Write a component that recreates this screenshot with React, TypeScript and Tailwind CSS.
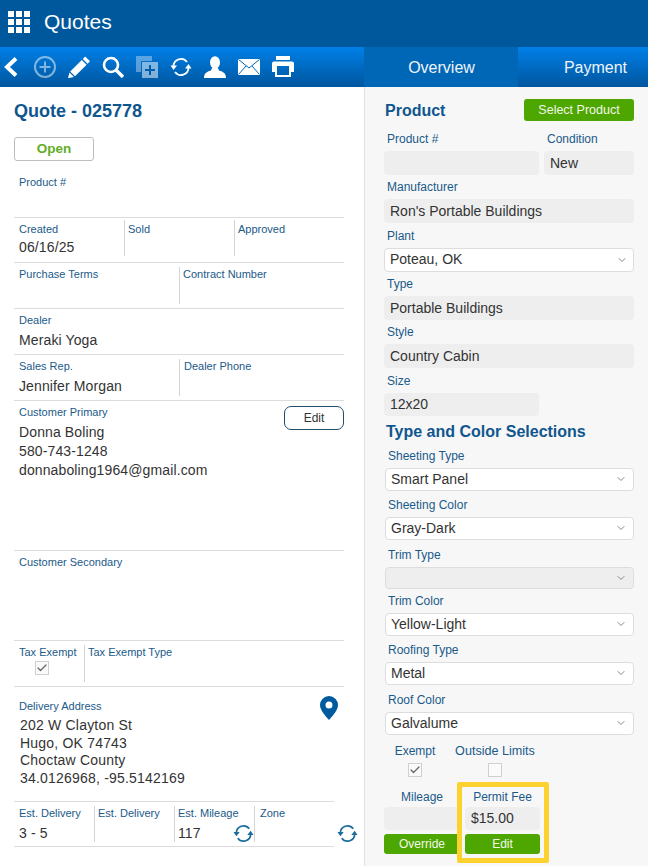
import { ChevronDown, Check } from 'lucide-react';

function SyncIcon({ className }: { className?: string }) {
  return (
    <svg viewBox="0 0 22 22" className={className} fill="none" stroke="currentColor" strokeWidth="1.8">
      <path d="M3.500 10.500A7.500 7.500 0 0 1 17 6" />
      <path d="M0.500 9.500h6.500l-3.500 4.500z" fill="currentColor" stroke="none" />
      <path d="M18.500 11.500A7.500 7.500 0 0 1 5 16" />
      <path d="M21.500 12.500h-6.500l3.500-4.500z" fill="currentColor" stroke="none" />
    </svg>
  );
}

function Toolbar() {
  return (
    <div className="flex h-[40px] w-[364px] items-center gap-[12px] text-white">
      <svg viewBox="0 0 22 22" className="h-[22px] w-[22px]" fill="none" stroke="white" strokeWidth="4" strokeLinejoin="miter">
        <path d="M16 2.500 7 11l9 8.500" />
      </svg>
      <svg viewBox="0 0 22 22" className="h-[22px] w-[22px] opacity-50" fill="none" stroke="white" strokeWidth="2">
        <circle cx="11" cy="11" r="10" />
        <path d="M11 5.500v11M5.500 11h11" />
      </svg>
      <svg viewBox="0 0 22 22" className="h-[22px] w-[22px]" fill="white">
        <path d="M17.200 0.500 22 5.300l-2.400 2.400-4.800-4.800z" />
        <path d="M13.800 4 18.600 8.800 7 20.200 2.200 15.400z" />
        <path d="M1.500 16.600 5.900 21 0 22.200z" />
      </svg>
      <svg viewBox="0 0 22 22" className="h-[22px] w-[22px]" fill="none" stroke="white">
        <circle cx="9" cy="9" r="7" strokeWidth="2.600" />
        <path d="m14 14 7 7" strokeWidth="3.400" />
      </svg>
      <svg viewBox="0 0 22 22" className="h-[22px] w-[22px] opacity-50">
        <path d="M0 0h16v5H5v11H0z" fill="white" fillOpacity="0.7" />
        <path d="M6 6h16v16H6z" fill="white" />
        <path d="M14 9v10M9 14h10" stroke="#00569e" strokeWidth="2" />
      </svg>
      <SyncIcon className="h-[22px] w-[22px]" />
      <svg viewBox="0 0 22 22" className="h-[22px] w-[22px]" fill="white">
        <ellipse cx="11" cy="6.500" rx="5" ry="6.200" />
        <path d="M8 12h6l1 2.500c3.500 1 7 2.200 7 7.500H0c0-5.300 3.500-6.500 7-7.500z" />
      </svg>
      <svg viewBox="0 0 22 22" className="h-[22px] w-[22px]">
        <rect x="0" y="3" width="22" height="16" fill="white" />
        <path d="M0.500 3.500 11 12l10.500-8.500M0.500 18.500l7.500-8.500M21.500 18.500 14 10" fill="none" stroke="#0068b8" strokeWidth="1" />
      </svg>
      <svg viewBox="0 0 22 22" className="h-[22px] w-[22px]" fill="white">
        <path d="M4 0h14v4H4z" />
        <path fillRule="evenodd" d="M2 5.500h18q2 0 2 2V16h-3v5H3v-5H0V7.500q0-2 2-2zM5 10v9h12v-9z" />
      </svg>
    </div>
  );
}

function Cell({ label, value, tight, className }: { label: string; value?: string; tight?: boolean; className?: string }) {
  return (
    <div className={`h-full ${className ?? 'pl-[5px]'}`}>
      <div className="pt-[5px] text-[11px] leading-[13px] text-[#1a5a8a]">{label}</div>
      {value && (
        <div className={`text-[14px] leading-[16px] tracking-[0.12px] text-[#333] ${tight ? 'mt-[3px]' : 'mt-[5px]'}`}>{value}</div>
      )}
    </div>
  );
}

function Divider({ className }: { className?: string }) {
  return <div className={`w-px self-stretch bg-[#d4d4d4] ${className ?? ''}`} />;
}

function Tick({ checked }: { checked?: boolean }) {
  return (
    <div className="flex h-[14px] w-[14px] items-center justify-center border border-[#d0d0d0] bg-[#fafafa]">
      {checked && <Check size={12} strokeWidth={2.5} className="text-[#666]" />}
    </div>
  );
}

function LeftPanel() {
  return (
    <div className="w-[364px] shrink-0 bg-white pl-[14px] pr-[20px]">
      <h1 className="pt-[14px] text-[18px] font-bold leading-[20px] text-[#0f568f]">Quote - 025778</h1>
      <div className="mt-[16px] flex h-[24px] w-[80px] items-center justify-center rounded-[3px] border border-[#bdbdbd] text-[13.5px] font-bold text-[#62ad28]">
        Open
      </div>
      <div className="h-[56px]">
        <Cell label="Product #" className="pl-[5px] pt-[10px]" />
      </div>
      <div className="flex h-[45px] border-t border-[#dcdcdc]">
        <Cell label="Created" value="06/16/25" tight className="w-[110px] pl-[5px]" />
        <Divider className="mt-[2px] mb-[6px]" />
        <Cell label="Sold" className="w-[109px] pl-[3px]" />
        <Divider className="mt-[2px] mb-[6px]" />
        <Cell label="Approved" className="flex-1 pl-[3px]" />
      </div>
      <div className="flex h-[46px] border-t border-[#dcdcdc]">
        <Cell label="Purchase Terms" className="w-[165px] pl-[5px]" />
        <Divider className="mt-[4px] mb-[4px]" />
        <Cell label="Contract Number" className="flex-1 pl-[3px]" />
      </div>
      <div className="h-[46px] border-t border-[#dcdcdc]">
        <Cell label="Dealer" value="Meraki Yoga" />
      </div>
      <div className="flex h-[46px] border-t border-[#dcdcdc]">
        <Cell label="Sales Rep." value="Jennifer Morgan" className="w-[165px] pl-[5px]" />
        <Divider className="mt-[4px] mb-[4px]" />
        <Cell label="Dealer Phone" className="flex-1 pl-[4px]" />
      </div>
      <div className="flex h-[150px] justify-between border-t border-[#dcdcdc]">
        <div className="pl-[5px]">
          <div className="pt-[5px] text-[11px] leading-[13px] text-[#1a5a8a]">Customer Primary</div>
          <div className="mt-[4px] text-[14px] leading-[19px] tracking-[0.12px] text-[#333]">
            <div>Donna Boling</div>
            <div>580-743-1248</div>
            <div>donnaboling1964@gmail.com</div>
          </div>
        </div>
        <div className="mt-[5px] flex h-[24px] w-[60px] items-center justify-center rounded-[7px] border border-[#1f4e6e] text-[12px] text-[#333]">
          Edit
        </div>
      </div>
      <div className="h-[90px] border-t border-[#dcdcdc]">
        <Cell label="Customer Secondary" />
      </div>
      <div className="flex h-[46px] border-t border-[#dcdcdc]">
        <div className="w-[70px] pl-[5px]">
          <div className="pt-[5px] text-[11px] leading-[13px] text-[#1a5a8a]">Tax Exempt</div>
          <div className="mt-[2px] pl-[16px]">
            <Tick checked />
          </div>
        </div>
        <Divider className="mt-[4px] mb-[4px]" />
        <Cell label="Tax Exempt Type" className="flex-1 pl-[3px]" />
      </div>
      <div className="flex h-[115px] justify-between border-t border-[#dcdcdc]">
        <div className="pl-[5px]">
          <div className="pt-[13px] text-[11px] leading-[13px] text-[#1a5a8a]">Delivery Address</div>
          <div className="mt-[4px] pl-[1px] text-[14px] leading-[17.700px] tracking-[0.2px] text-[#333]">
            <div>202 W Clayton St</div>
            <div>Hugo, OK 74743</div>
            <div>Choctaw County</div>
            <div>34.0126968, -95.5142169</div>
          </div>
        </div>
        <svg viewBox="0 0 18 24" className="mt-[9px] mr-[6px] h-[24px] w-[18px] text-[#005a9e]" fill="currentColor">
          <path fillRule="evenodd" d="M9 0a9 9 0 0 1 9 9c0 5-5 10.500-9 15-4-4.500-9-10-9-15a9 9 0 0 1 9-9zm0 5.500a3.500 3.500 0 1 0 0 7 3.500 3.500 0 0 0 0-7z" />
        </svg>
      </div>
      <div className="relative flex h-[46px] w-[320px] border-y border-[#dcdcdc]">
        <Cell label="Est. Delivery" value="3 - 5" className="w-[80px] pl-[5px]" />
        <Divider className="mt-[4px] mb-[4px]" />
        <Cell label="Est. Delivery" className="w-[79px] pl-[3px]" />
        <Divider className="mt-[4px] mb-[4px]" />
        <Cell label="Est. Mileage" value="117" className="w-[79px] pl-[3px]" />
        <Divider className="mt-[4px] mb-[4px]" />
        <Cell label="Zone" className="flex-1 pl-[5px]" />
        <SyncIcon className="absolute left-[219px] top-[21px] h-[21px] w-[21px] text-[#1b6d9c]" />
        <SyncIcon className="absolute left-[323px] top-[21px] h-[21px] w-[21px] text-[#1b6d9c]" />
      </div>
    </div>
  );
}

function Label({ children, className }: { children: string; className?: string }) {
  return <div className={`flex items-end pb-[5px] text-[12px] leading-[14px] text-[#1a5a8a] ${className ?? 'h-[24px] pl-[3px]'}`}>{children}</div>;
}

function ReadOnly({ value, className }: { value?: string; className?: string }) {
  return (
    <div className={`flex items-center rounded-[4px] bg-[#eeeeee] pl-[6px] text-[14px] text-[#333] ${className ?? 'h-[24px]'}`}>
      {value}
    </div>
  );
}

function SelectField({
  label,
  value,
  disabled,
  zone,
  box,
}: {
  label: string;
  value?: string;
  disabled?: boolean;
  zone: string;
  box?: string;
}) {
  return (
    <div className="ml-px">
      <Label className={`${zone} pl-[3px]`}>{label}</Label>
      <div
        className={`flex items-center justify-between rounded-[4px] border border-[#dddddd] pb-px pl-[5px] pr-[6px] text-[14px] text-[#333] ${
          box ?? 'h-[23px]'
        } ${disabled ? 'bg-[#eeeeee]' : 'bg-white'}`}
      >
        <span>{value}</span>
        <ChevronDown size={12} className="text-[#888]" />
      </div>
    </div>
  );
}

function RightPanel() {
  return (
    <div className="flex-1 border-l border-[#e2e2e2] bg-[#f7f7f7] pl-[19px] pr-[14px] pt-[12px]">
      <div className="flex h-[22px] items-center justify-between">
        <h2 className="pl-px pt-[2px] text-[16px] font-bold text-[#0f568f]">Product</h2>
        <div className="flex h-[22px] w-[110px] items-center justify-center rounded-[3px] bg-[#4ea600] text-[12.5px] text-[#f2f8ea]">
          Select Product
        </div>
      </div>
      <div className="mt-[6px] flex gap-[5px]">
        <div className="w-[155px]">
          <Label>Product #</Label>
          <ReadOnly />
        </div>
        <div className="flex-1">
          <Label>Condition</Label>
          <ReadOnly value="New" />
        </div>
      </div>
      <Label>Manufacturer</Label>
      <ReadOnly value="Ron's Portable Buildings" />
      <Label className="h-[25px] pl-[3px]">Plant</Label>
      <div className="flex h-[24px] items-center justify-between rounded-[4px] border border-[#dddddd] bg-white pb-px pl-[5px] pr-[5px] text-[14px] text-[#333]">
        <span>Poteau, OK</span>
        <ChevronDown size={12} className="text-[#888]" />
      </div>
      <Label>Type</Label>
      <ReadOnly value="Portable Buildings" />
      <Label>Style</Label>
      <ReadOnly value="Country Cabin" />
      <Label className="h-[25px] pl-[3px]">Size</Label>
      <ReadOnly value="12x20" className="h-[23px] w-[155px]" />
      <h2 className="flex h-[28px] items-center pl-[2px] pt-[4px] text-[16px] font-bold text-[#0f568f]">Type and Color Selections</h2>
      <SelectField label="Sheeting Type" value="Smart Panel" zone="h-[24px]" />
      <SelectField label="Sheeting Color" value="Gray-Dark" zone="h-[26px]" />
      <SelectField label="Trim Type" disabled zone="h-[27px]" box="h-[22px]" />
      <SelectField label="Trim Color" value="Yellow-Light" zone="h-[24px]" />
      <SelectField label="Roofing Type" value="Metal" zone="h-[26px]" />
      <SelectField label="Roof Color" value="Galvalume" zone="h-[27px]" />
      <div className="flex text-[12px] text-[#1a5a8a]">
        <div className="flex w-[62px] flex-col items-center">
          <div className="flex h-[28px] items-end pb-[5px] leading-[14px]">Exempt</div>
          <Tick checked />
        </div>
        <div className="flex w-[98px] flex-col items-center">
          <div className="flex h-[28px] items-end pb-[5px] text-[12.6px] leading-[14px]">Outside Limits</div>
          <Tick />
        </div>
      </div>
      <div className="flex gap-[5px]">
        <div className="w-[76px]">
          <div className="flex h-[30px] items-end justify-center pb-[3px] text-[12px] leading-[14px] text-[#1a5a8a]">Mileage</div>
          <ReadOnly className="h-[23px]" />
          <div className="mt-[4px] flex h-[20px] items-center justify-center rounded-[3px] bg-[#4ea600] text-[12px] text-[#f2f8ea]">
            Override
          </div>
        </div>
        <div className="relative w-[75px]">
          <div className="flex h-[30px] items-end justify-center pb-[3px] text-[12px] leading-[14px] text-[#1a5a8a]">Permit Fee</div>
          <ReadOnly value="$15.00" className="h-[23px]" />
          <div className="mt-[4px] flex h-[20px] items-center justify-center rounded-[3px] bg-[#4ea600] text-[12px] text-[#f2f8ea]">
            Edit
          </div>
          <div className="absolute -left-[8px] -right-[9px] top-[5px] h-[81px] rounded-[2px] border-[5px] border-[#fdd22f]" />
        </div>
      </div>
    </div>
  );
}

export default function App() {
  return (
    <div className="h-[866px] w-[648px] overflow-hidden bg-white [font-family:'Liberation_Sans',Arial,sans-serif]">
      <header className="flex h-[47px] items-center bg-[#00589c] pb-[3px] pl-[8px] text-white">
        <div className="grid grid-cols-3 gap-[2px]">
          {Array.from({ length: 9 }).map((_, i) => (
            <span key={i} className="h-[6px] w-[6px] bg-white" />
          ))}
        </div>
        <span className="ml-[14px] text-[21px]">Quotes</span>
      </header>
      <div className="flex h-[40px] bg-gradient-to-b from-[#0080e8] to-[#00569e] text-[16px] text-[#eef5fb]">
        <Toolbar />
        <div className="flex w-[154px] items-center justify-center bg-[#0066b6] pl-px pt-px">Overview</div>
        <div className="flex flex-1 items-center justify-center pl-[25px] pt-px">Payment</div>
      </div>
      <div className="flex h-[779px]">
        <LeftPanel />
        <RightPanel />
      </div>
    </div>
  );
}
